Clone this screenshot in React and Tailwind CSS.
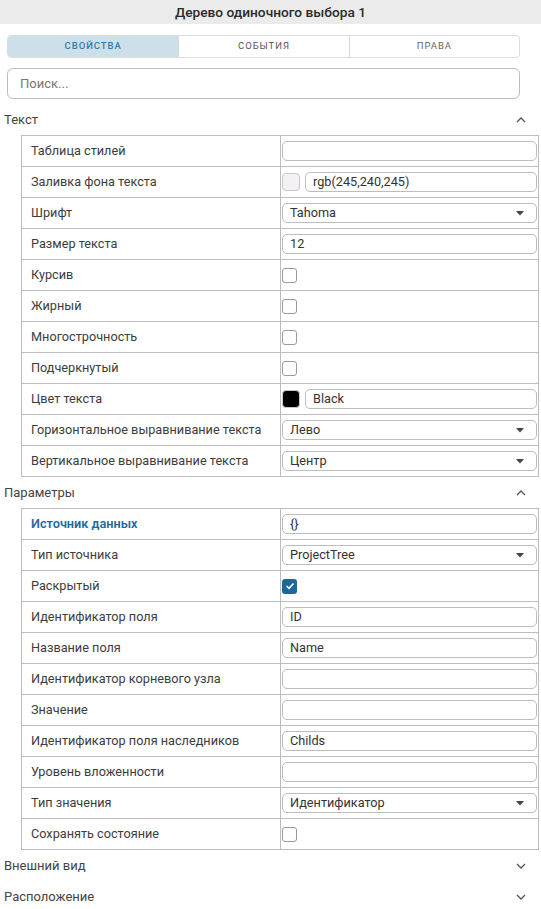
import React from "react";

const FONT = { fontFamily: "Roboto, 'Noto Sans', sans-serif" };

function Chevron({ up }) {
  return (
    <svg width="10" height="6" viewBox="0 0 10 6" className="text-[#555]">
      {up ? (
        <polyline points="1,5 5,1 9,5" fill="none" stroke="currentColor" strokeWidth="1.3" />
      ) : (
        <polyline points="1,1 5,5 9,1" fill="none" stroke="currentColor" strokeWidth="1.3" />
      )}
    </svg>
  );
}

function SectionHeader({ title, open }) {
  return (
    <div className="h-[31px] flex items-center justify-between pl-[4px] pr-[15px] text-[13px] text-[#444]">
      <span>{title}</span>
      <Chevron up={open} />
    </div>
  );
}

function TextInput({ value }) {
  return (
    <div className="flex-1 h-[20px] border border-[#bdbdbd] rounded-[5px] bg-white flex items-center pl-[7px] text-[12.7px] text-[#333] leading-none">
      {value}
    </div>
  );
}

function Select({ value }) {
  return (
    <div className="flex-1 h-[20px] border border-[#bdbdbd] rounded-[5px] bg-white flex items-center justify-between pl-[7px] pr-[12px] text-[12.7px] text-[#333] leading-none">
      <span>{value}</span>
      <svg width="8" height="5" viewBox="0 0 8 5">
        <polygon points="0,0 8,0 4,4.5" fill="#444" />
      </svg>
    </div>
  );
}

function Checkbox({ checked }) {
  if (checked) {
    return (
      <div className="w-[15px] h-[15px] rounded-[3px] bg-[#1b689c] flex items-center justify-center">
        <svg width="10" height="8" viewBox="0 0 10 8">
          <polyline points="1.5,4 4,6.3 8.5,1.5" fill="none" stroke="white" strokeWidth="1.6" />
        </svg>
      </div>
    );
  }
  return <div className="w-[15px] h-[15px] rounded-[3px] border border-[#9a9a9a] bg-white" />;
}

function ColorField({ color, value }) {
  return (
    <div className="flex-1 flex items-center gap-[5px]">
      <div
        className="w-[18px] h-[18px] rounded-[4px] border border-[#c8c8c8]"
        style={{ backgroundColor: color }}
      />
      <TextInput value={value} />
    </div>
  );
}

function Row({ label, strong, children }) {
  return (
    <div className="grid grid-cols-[259px_258px] h-[31px] border-b border-[#bdbdbd]">
      <div
        className={
          strong
            ? "border-r border-[#bdbdbd] flex items-center pl-[9px] text-[12.7px] font-semibold text-[#1f6aa0]"
            : "border-r border-[#bdbdbd] flex items-center pl-[9px] text-[12.7px] text-[#3c3c3c]"
        }
      >
        {label}
      </div>
      <div className="border-r border-[#bdbdbd] flex items-center px-[1px]">{children}</div>
    </div>
  );
}

function PropTable({ children }) {
  return (
    <div className="ml-[21px] w-[518px] border-l border-t border-[#bdbdbd]">{children}</div>
  );
}

export default function App() {
  return (
    <div className="w-[541px] h-[909px] bg-white overflow-hidden" style={FONT}>
      <div className="h-[24px] bg-[#ebebeb] flex items-center justify-center text-[13.7px] font-medium text-[#2b2b2b]">
        Дерево одиночного выбора 1
      </div>

      <div className="px-[7px] pt-[11px]">
        <div className="w-[513px] h-[23px] grid grid-cols-3 border border-[#dcdcdc] rounded-[4px] overflow-hidden text-[9.5px] tracking-[0.1em]">
          <div className="bg-[#cde0ea] text-[#2f7bb0] flex items-center justify-center font-medium">
            СВОЙСТВА
          </div>
          <div className="border-l border-[#dcdcdc] text-[#555] flex items-center justify-center">
            СОБЫТИЯ
          </div>
          <div className="border-l border-[#dcdcdc] text-[#666] flex items-center justify-center">
            ПРАВА
          </div>
        </div>

        <div className="mt-[10px] w-[513px] h-[31px] border border-[#bdbdbd] rounded-[6px] flex items-center pl-[12px] text-[13px] text-[#777]">
          Поиск...
        </div>
      </div>

      <div className="mt-[5px]">
        <SectionHeader title="Текст" open />
        <PropTable>
          <Row label="Таблица стилей">
            <TextInput value="" />
          </Row>
          <Row label="Заливка фона текста">
            <ColorField color="rgb(245,240,245)" value="rgb(245,240,245)" />
          </Row>
          <Row label="Шрифт">
            <Select value="Tahoma" />
          </Row>
          <Row label="Размер текста">
            <TextInput value="12" />
          </Row>
          <Row label="Курсив">
            <Checkbox />
          </Row>
          <Row label="Жирный">
            <Checkbox />
          </Row>
          <Row label="Многострочность">
            <Checkbox />
          </Row>
          <Row label="Подчеркнутый">
            <Checkbox />
          </Row>
          <Row label="Цвет текста">
            <ColorField color="#000000" value="Black" />
          </Row>
          <Row label="Горизонтальное выравнивание текста">
            <Select value="Лево" />
          </Row>
          <Row label="Вертикальное выравнивание текста">
            <Select value="Центр" />
          </Row>
        </PropTable>

        <SectionHeader title="Параметры" open />
        <PropTable>
          <Row label="Источник данных" strong>
            <TextInput value="{}" />
          </Row>
          <Row label="Тип источника">
            <Select value="ProjectTree" />
          </Row>
          <Row label="Раскрытый">
            <Checkbox checked />
          </Row>
          <Row label="Идентификатор поля">
            <TextInput value="ID" />
          </Row>
          <Row label="Название поля">
            <TextInput value="Name" />
          </Row>
          <Row label="Идентификатор корневого узла">
            <TextInput value="" />
          </Row>
          <Row label="Значение">
            <TextInput value="" />
          </Row>
          <Row label="Идентификатор поля наследников">
            <TextInput value="Childs" />
          </Row>
          <Row label="Уровень вложенности">
            <TextInput value="" />
          </Row>
          <Row label="Тип значения">
            <Select value="Идентификатор" />
          </Row>
          <Row label="Сохранять состояние">
            <Checkbox />
          </Row>
        </PropTable>

        <SectionHeader title="Внешний вид" />
        <SectionHeader title="Расположение" />
      </div>
    </div>
  );
}
